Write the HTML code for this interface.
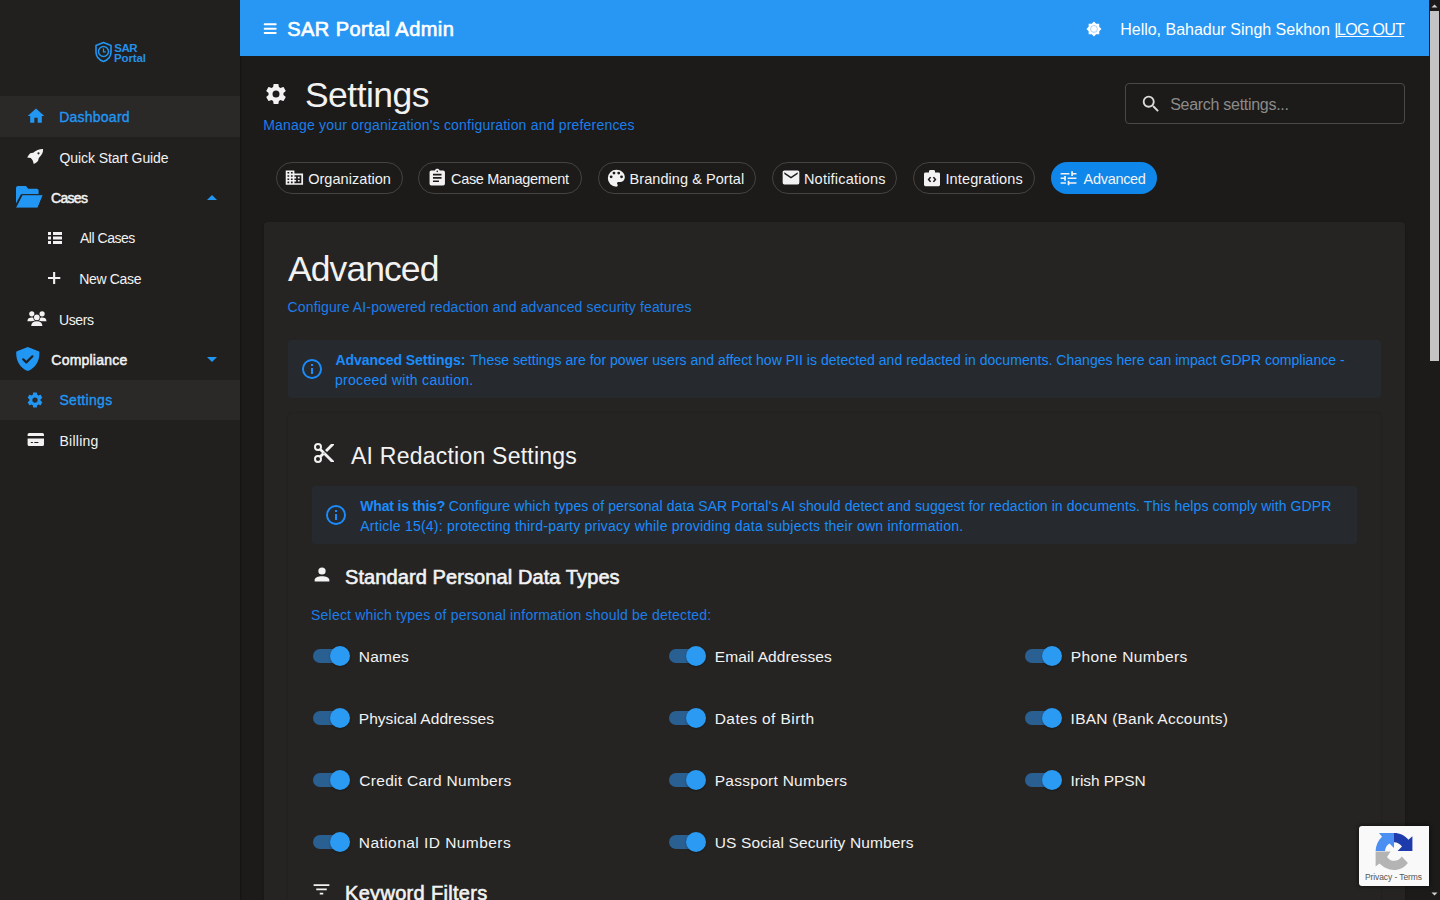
<!DOCTYPE html>
<html><head><meta charset="utf-8"><title>SAR Portal Admin - Settings</title>
<style>
html,body{margin:0;padding:0;width:1440px;height:900px;overflow:hidden;background:#1c1b1a;}
body{position:relative;font-family:"Liberation Sans",sans-serif;}
.t{position:absolute;white-space:nowrap;}
.r{position:absolute;}
svg.r{overflow:visible;}
</style></head><body>
<div class="r" style="left:0px;top:0px;width:240px;height:900px;background:#21201f;box-shadow:1px 0 2px rgba(0,0,0,.35);"></div>
<div class="r" style="left:0px;top:96px;width:240px;height:41px;background:#2a2928;"></div>
<div class="r" style="left:0px;top:380px;width:240px;height:40px;background:#2a2928;"></div>
<svg class="r" style="left:94px;top:41px;width:19px;height:22px" viewBox="0 0 19 22"><path d="M9.5,1.5 L17,4.5 V11 C17,15.5 13.8,19 9.5,20.5 C5.2,19 2,15.5 2,11 V4.5 Z" fill="none" stroke="#2196f3" stroke-width="1.6" stroke-linejoin="round"/><circle cx="9.5" cy="10.5" r="5" fill="none" stroke="#2196f3" stroke-width="1.4"/><path d="M9.5,7.5 V10.8 H11.8" fill="none" stroke="#2196f3" stroke-width="1.2"/></svg>
<div class="t" style="left:114.36px;top:42.77px;font-size:11.5px;line-height:11.5px;color:#2590e8;font-weight:bold;letter-spacing:-0.545px;">SAR</div>
<div class="t" style="left:113.89px;top:52.57px;font-size:11.5px;line-height:11.5px;color:#2590e8;font-weight:bold;letter-spacing:-0.090px;">Portal</div>
<svg class="r" style="left:26px;top:106px;width:20px;height:20px;" viewBox="0 0 24 24" preserveAspectRatio="none"><path fill="#2196f3" d="M10,20V14H14V20H19V12H22L12,3L2,12H5V20H10Z"/></svg>
<div class="t" style="left:59.28px;top:110.15px;font-size:14px;line-height:14px;color:#2196f3;letter-spacing:0.225px;-webkit-text-stroke:0.35px #2196f3;">Dashboard</div>
<svg class="r" style="left:22px;top:142px;width:28px;height:28px" viewBox="22 142 28 28"><path fill-rule="evenodd" fill="#f2f2f2" d="M43.1,149 C39.6,148.9 35.8,150.3 33.2,152.8 L30.2,153.2 C29,154.3 28,155.8 27.2,157.4 L30.8,158 L32.6,160.2 L33.8,164.1 C35.4,163.3 36.9,162.1 38,160.9 L38.8,157.9 C41.8,155.3 43.3,152.3 43.1,149 Z M38.5,152.2 A1.1,1.1 0 1,0 38.5,154.4 A1.1,1.1 0 1,0 38.5,152.2Z"/></svg>
<div class="t" style="left:59.50px;top:150.85px;font-size:14px;line-height:14px;color:#f2f2f2;letter-spacing:-0.088px;">Quick Start Guide</div>
<svg class="r" style="left:12px;top:180px;width:36px;height:36px" viewBox="12 180 36 36"><path fill="#2196f3" d="M16,188 Q16,186 18,186 H26 L28.2,188.7 H36.8 Q38.6,188.7 38.6,190.5 V194.2 H21 L16,203.5 Z"/><path fill="#2196f3" stroke="#21201f" stroke-width="1" stroke-linejoin="round" d="M22.2,194.7 H43.3 L37.8,208.1 H15.4 Z"/></svg>
<div class="t" style="left:51.10px;top:190.85px;font-size:14px;line-height:14px;color:#f2f2f2;letter-spacing:-0.715px;-webkit-text-stroke:0.5px #f2f2f2;">Cases</div>
<svg class="r" style="left:200px;top:185px;width:24px;height:24px;" viewBox="0 0 24 24" preserveAspectRatio="none"><path fill="#2196f3" d="M7,15L12,10L17,15H7Z"/></svg>
<svg class="r" style="left:47px;top:231px;width:16px;height:14px;" viewBox="0 0 16 14" preserveAspectRatio="none"><path fill="#f2f2f2" d="M1,1H4V4H1Z M6,1H15V4H6Z M1,5.5H4V8.5H1Z M6,5.5H15V8.5H6Z M1,10H4V13H1Z M6,10H15V13H6Z"/></svg>
<div class="t" style="left:80.00px;top:231.15px;font-size:14px;line-height:14px;color:#f2f2f2;letter-spacing:-0.478px;">All Cases</div>
<svg class="r" style="left:44px;top:268px;width:20px;height:20px" viewBox="44 268 20 20"><path fill="#f2f2f2" d="M53.1,272 H55.2 V276.9 H60.3 V279 H55.2 V283.9 H53.1 V279 H48 V276.9 H53.1 Z"/></svg>
<div class="t" style="left:79.28px;top:271.95px;font-size:14px;line-height:14px;color:#f2f2f2;letter-spacing:-0.337px;">New Case</div>
<svg class="r" style="left:24px;top:307px;width:26px;height:26px" viewBox="24 307 26 26"><g fill="#f2f2f2"><circle cx="31.8" cy="313.8" r="2.6"/><circle cx="42.1" cy="313.8" r="2.6"/><path d="M27.4,321.2 C27.4,318.4 29.3,317.4 31.8,317.4 C33,317.4 34,317.6 34.6,318.2 C34.6,319.4 35,320.4 35.6,321.2 Z"/><path d="M46.5,321.2 C46.5,318.4 44.6,317.4 42.1,317.4 C40.9,317.4 39.9,317.6 39.3,318.2 C39.3,319.4 38.9,320.4 38.3,321.2 Z"/></g><circle cx="36.8" cy="317.4" r="3.5" fill="#21201f"/><circle cx="36.8" cy="317.4" r="2.8" fill="#f2f2f2"/><path fill="#21201f" d="M30.4,326.6 C30.4,322.2 32.6,320.6 36.8,320.6 C41,320.6 43.2,322.2 43.2,326.6Z"/><path fill="#f2f2f2" d="M31.2,326.1 C31.2,322.9 33.2,321.3 36.8,321.3 C40.4,321.3 42.4,322.9 42.4,326.1Z"/></svg>
<div class="t" style="left:58.98px;top:312.95px;font-size:14px;line-height:14px;color:#f2f2f2;letter-spacing:-0.365px;">Users</div>
<svg class="r" style="left:12px;top:344px;width:32px;height:30px" viewBox="12 344 32 30"><path fill="#2196f3" d="M27.8,347 L38.6,351.2 C39.4,351.5 39.4,352 39.4,353 C39.4,361.5 35.5,367.6 28.6,370.7 C28.1,370.9 27.5,370.9 27,370.7 C20.1,367.6 16.2,361.5 16.2,353 C16.2,352 16.2,351.5 17,351.2 Z"/><path fill="none" stroke="#21201f" stroke-width="2.2" stroke-linecap="round" stroke-linejoin="round" d="M23.2,359.3 L26.3,362.4 L32.4,356.3"/></svg>
<div class="t" style="left:51.30px;top:353.15px;font-size:14px;line-height:14px;color:#f2f2f2;letter-spacing:0.220px;-webkit-text-stroke:0.5px #f2f2f2;">Compliance</div>
<svg class="r" style="left:200px;top:347px;width:24px;height:24px;" viewBox="0 0 24 24" preserveAspectRatio="none"><path fill="#2196f3" d="M7,10L12,15L17,10H7Z"/></svg>
<svg class="r" style="left:26px;top:391px;width:18px;height:18px;" viewBox="0 0 24 24" preserveAspectRatio="none"><path fill="#2196f3" d="M12,15.5A3.5,3.5 0 0,1 8.5,12A3.5,3.5 0 0,1 12,8.5A3.5,3.5 0 0,1 15.5,12A3.5,3.5 0 0,1 12,15.5M19.43,12.97C19.47,12.65 19.5,12.33 19.5,12C19.5,11.67 19.47,11.34 19.43,11L21.54,9.37C21.73,9.22 21.78,8.95 21.66,8.73L19.66,5.27C19.54,5.05 19.27,4.96 19.05,5.05L16.56,6.05C16.04,5.66 15.5,5.32 14.87,5.07L14.5,2.42C14.46,2.18 14.25,2 14,2H10C9.75,2 9.54,2.18 9.5,2.42L9.13,5.07C8.5,5.32 7.96,5.66 7.44,6.05L4.95,5.05C4.73,4.96 4.46,5.05 4.34,5.27L2.34,8.73C2.21,8.95 2.27,9.22 2.46,9.37L4.57,11C4.53,11.34 4.5,11.67 4.5,12C4.5,12.33 4.53,12.65 4.57,12.97L2.46,14.63C2.27,14.78 2.21,15.05 2.34,15.27L4.34,18.73C4.46,18.95 4.73,19.03 4.95,18.95L7.44,17.94C7.96,18.34 8.5,18.68 9.13,18.93L9.5,21.58C9.54,21.82 9.75,22 10,22H14C14.25,22 14.46,21.82 14.5,21.58L14.87,18.93C15.5,18.67 16.04,18.34 16.56,17.94L19.05,18.95C19.27,19.03 19.54,18.95 19.66,18.73L21.66,15.27C21.78,15.05 21.73,14.78 21.54,14.63L19.43,12.97Z"/></svg>
<div class="t" style="left:59.40px;top:392.95px;font-size:14px;line-height:14px;color:#2196f3;letter-spacing:0.317px;-webkit-text-stroke:0.35px #2196f3;">Settings</div>
<svg class="r" style="left:24px;top:428px;width:24px;height:24px" viewBox="24 428 24 24"><path fill="#f2f2f2" d="M29.2,433.1 H42.4 Q44,433.1 44,434.6 V436.1 H27.6 V434.6 Q27.6,433.1 29.2,433.1Z M27.6,438.5 H44 V444.5 Q44,446 42.4,446 H29.2 Q27.6,446 27.6,444.5Z"/><path fill="#21201f" d="M30.8,442 H32.9 V443 H30.8Z M34.3,442 H38.4 V443 H34.3Z"/></svg>
<div class="t" style="left:59.48px;top:434.05px;font-size:14px;line-height:14px;color:#f2f2f2;letter-spacing:0.253px;">Billing</div>
<div class="r" style="left:240px;top:0px;width:1189px;height:56px;background:#2897f4;"></div>
<svg class="r" style="left:258px;top:16px;width:24px;height:24px" viewBox="258 16 24 24"><g fill="#fff"><rect x="263.7" y="23.2" width="13" height="2" rx="1"/><rect x="263.7" y="27.8" width="13" height="2" rx="1"/><rect x="263.7" y="32.1" width="13" height="2" rx="1"/></g></svg>
<div class="t" style="left:287.30px;top:18.87px;font-size:20px;line-height:20px;color:#ffffff;letter-spacing:0.427px;-webkit-text-stroke:0.65px #ffffff;">SAR Portal Admin</div>
<svg class="r" style="left:1085.75px;top:20.75px;width:15.9px;height:15.9px" viewBox="0 0 24 24"><path fill="#fff" d="M20,8.69V4H15.31L12,0.69L8.69,4H4V8.69L0.69,12L4,15.31V20H8.69L12,23.31L15.31,20H20V15.31L23.31,12L20,8.69Z"/><circle cx="12" cy="12" r="5.2" fill="none" stroke="#2897f4" stroke-opacity="0.55" stroke-width="1.1"/></svg>
<div class="t" style="left:1120.22px;top:21.66px;font-size:16px;line-height:16px;color:#ffffff;letter-spacing:-0.012px;">Hello, Bahadur Singh Sekhon |</div>
<div class="t" style="left:1337.02px;top:21.66px;font-size:16px;line-height:16px;color:#ffffff;letter-spacing:-0.683px;text-decoration:underline;">LOG OUT</div>
<svg class="r" style="left:264px;top:82px;width:24px;height:24px;" viewBox="0 0 24 24" preserveAspectRatio="none"><path fill="#f2f2f2" d="M12,15.5A3.5,3.5 0 0,1 8.5,12A3.5,3.5 0 0,1 12,8.5A3.5,3.5 0 0,1 15.5,12A3.5,3.5 0 0,1 12,15.5M19.43,12.97C19.47,12.65 19.5,12.33 19.5,12C19.5,11.67 19.47,11.34 19.43,11L21.54,9.37C21.73,9.22 21.78,8.95 21.66,8.73L19.66,5.27C19.54,5.05 19.27,4.96 19.05,5.05L16.56,6.05C16.04,5.66 15.5,5.32 14.87,5.07L14.5,2.42C14.46,2.18 14.25,2 14,2H10C9.75,2 9.54,2.18 9.5,2.42L9.13,5.07C8.5,5.32 7.96,5.66 7.44,6.05L4.95,5.05C4.73,4.96 4.46,5.05 4.34,5.27L2.34,8.73C2.21,8.95 2.27,9.22 2.46,9.37L4.57,11C4.53,11.34 4.5,11.67 4.5,12C4.5,12.33 4.53,12.65 4.57,12.97L2.46,14.63C2.27,14.78 2.21,15.05 2.34,15.27L4.34,18.73C4.46,18.95 4.73,19.03 4.95,18.95L7.44,17.94C7.96,18.34 8.5,18.68 9.13,18.93L9.5,21.58C9.54,21.82 9.75,22 10,22H14C14.25,22 14.46,21.82 14.5,21.58L14.87,18.93C15.5,18.67 16.04,18.34 16.56,17.94L19.05,18.95C19.27,19.03 19.54,18.95 19.66,18.73L21.66,15.27C21.78,15.05 21.73,14.78 21.54,14.63L19.43,12.97Z"/></svg>
<div class="t" style="left:304.93px;top:77.55px;font-size:35.5px;line-height:35.5px;color:#f2f2f2;letter-spacing:-0.523px;">Settings</div>
<div class="t" style="left:263.28px;top:117.85px;font-size:14px;line-height:14px;color:#1b7ee9;letter-spacing:0.193px;">Manage your organization's configuration and preferences</div>
<div class="r" style="left:1124.5px;top:83px;width:280px;height:40.5px;box-sizing:border-box;border:1px solid #4a4947;border-radius:4px;"></div>
<svg class="r" style="left:1140px;top:92.5px;width:22px;height:22px;" viewBox="0 0 24 24" preserveAspectRatio="none"><path fill="#dcdcdc" d="M9.5,3A6.5,6.5 0 0,1 16,9.5C16,11.11 15.41,12.59 14.44,13.73L14.71,14H15.5L20.5,19L19,20.5L14,15.5V14.71L13.73,14.44C12.590,15.41 11.11,16 9.5,16A6.5,6.5 0 0,1 3,9.5A6.5,6.5 0 0,1 9.5,3M9.5,5C7,5 5,7 5,9.5C5,12 7,14 9.5,14C12,14 14,12 14,9.5C14,7 12,5 9.5,5Z"/></svg>
<div class="t" style="left:1170.20px;top:96.96px;font-size:16px;line-height:16px;color:#8c8b8a;letter-spacing:-0.285px;">Search settings...</div>
<div class="r" style="left:276px;top:162px;width:127px;height:32px;box-sizing:border-box;border:1px solid #454341;border-radius:16px;"></div>
<svg class="r" style="left:284.27px;top:168.2px;width:20.8px;height:19.2px;" viewBox="0 0 24 24" preserveAspectRatio="none"><path fill="#f2f2f2" d="M18,15H16V17H18M18,11H16V13H18M20,19H12V17H14V15H12V13H14V11H12V9H20M10,7H8V5H10M10,11H8V9H10M10,15H8V13H10M10,19H8V17H10M6,7H4V5H6M6,11H4V9H6M6,15H4V13H6M6,19H4V17H6M12,7V3H2V21H22V7H12Z"/></svg>
<div class="t" style="left:308.17px;top:171.63px;font-size:14.5px;line-height:14.5px;color:#f2f2f2;letter-spacing:0.048px;">Organization</div>
<div class="r" style="left:418.4px;top:162px;width:163.60000000000002px;height:32px;box-sizing:border-box;border:1px solid #454341;border-radius:16px;"></div>
<svg class="r" style="left:427.0px;top:168.0px;width:20.5px;height:19.9px;" viewBox="0 0 24 24" preserveAspectRatio="none"><path fill="#f2f2f2" d="M17,9H7V7H17M17,13H7V11H17M14,17H7V15H14M12,3A1,1 0 0,1 13,4A1,1 0 0,1 12,5A1,1 0 0,1 11,4A1,1 0 0,1 12,3M19,3H14.82C14.4,1.84 13.3,1 12,1C10.7,1 9.6,1.84 9.18,3H5A2,2 0 0,0 3,5V19A2,2 0 0,0 5,21H19A2,2 0 0,0 21,19V5A2,2 0 0,0 19,3Z"/></svg>
<div class="t" style="left:451.07px;top:171.63px;font-size:14.5px;line-height:14.5px;color:#f2f2f2;letter-spacing:-0.332px;">Case Management</div>
<div class="r" style="left:598px;top:162px;width:158px;height:32px;box-sizing:border-box;border:1px solid #454341;border-radius:16px;"></div>
<svg class="r" style="left:605.2px;top:166.8px;width:22.7px;height:22.5px;" viewBox="0 0 24 24" preserveAspectRatio="none"><path fill="#f2f2f2" d="M17.5,12A1.5,1.5 0 0,1 16,10.5A1.5,1.5 0 0,1 17.5,9A1.5,1.5 0 0,1 19,10.5A1.5,1.5 0 0,1 17.5,12M14.5,8A1.5,1.5 0 0,1 13,6.5A1.5,1.5 0 0,1 14.5,5A1.5,1.5 0 0,1 16,6.5A1.5,1.5 0 0,1 14.5,8M9.5,8A1.5,1.5 0 0,1 8,6.5A1.5,1.5 0 0,1 9.5,5A1.5,1.5 0 0,1 11,6.5A1.5,1.5 0 0,1 9.5,8M6.5,12A1.5,1.5 0 0,1 5,10.5A1.5,1.5 0 0,1 6.5,9A1.5,1.5 0 0,1 8,10.5A1.5,1.5 0 0,1 6.5,12M12,3A9,9 0 0,0 3,12A9,9 0 0,0 12,21A1.5,1.5 0 0,0 13.5,19.5C13.5,19.11 13.35,18.76 13.11,18.5C12.88,18.23 12.73,17.88 12.73,17.5A1.5,1.5 0 0,1 14.23,16H16A5,5 0 0,0 21,11C21,6.58 16.97,3 12,3Z"/></svg>
<div class="t" style="left:629.54px;top:171.63px;font-size:14.5px;line-height:14.5px;color:#f2f2f2;letter-spacing:0.059px;">Branding & Portal</div>
<div class="r" style="left:772.2px;top:162px;width:125.29999999999995px;height:32px;box-sizing:border-box;border:1px solid #454341;border-radius:16px;"></div>
<svg class="r" style="left:780.5px;top:167.1px;width:20px;height:21px;" viewBox="0 0 24 24" preserveAspectRatio="none"><path fill="#f2f2f2" d="M20,8L12,13L4,8V6L12,11L20,6M20,4H4C2.89,4 2,4.89 2,6V18A2,2 0 0,0 4,20H20A2,2 0 0,0 22,18V6C22,4.89 21.1,4 20,4Z"/></svg>
<div class="t" style="left:803.94px;top:171.63px;font-size:14.5px;line-height:14.5px;color:#f2f2f2;letter-spacing:0.210px;">Notifications</div>
<div class="r" style="left:913.3px;top:162px;width:121.70000000000005px;height:32px;box-sizing:border-box;border:1px solid #454341;border-radius:16px;"></div>
<svg class="r" style="left:923px;top:168.5px;width:18px;height:18.1px" viewBox="0 0 18 20" preserveAspectRatio="none"><path fill="#f2f2f2" d="M2.5,4 H6 V2.5 Q6,1 7.5,1 H10.5 Q12,1 12,2.5 V4 H15.5 Q17,4 17,5.5 V17.5 Q17,19 15.5,19 H2.5 Q1,19 1,17.5 V5.5 Q1,4 2.5,4Z"/><path fill="none" stroke="#1c1b1a" stroke-width="1.6" d="M7.6,9 L5.6,11.6 L7.6,14.2 M10.4,9 L12.4,11.6 L10.4,14.2"/></svg>
<div class="t" style="left:945.40px;top:171.63px;font-size:14.5px;line-height:14.5px;color:#f2f2f2;letter-spacing:0.141px;">Integrations</div>
<div class="r" style="left:1050.7px;top:162px;width:106.59999999999991px;height:32px;background:#0f86e9;border-radius:16px;"></div>
<svg class="r" style="left:1058.3px;top:168.7px;width:21.1px;height:18.7px;" viewBox="0 0 24 24" preserveAspectRatio="none"><path fill="#f2f2f2" d="M3,17V19H9V17H3M3,5V7H13V5H3M13,21V19H21V17H13V15H11V21H13M7,9V11H3V13H7V15H9V9H7M21,13V11H11V13H21M15,9H17V7H21V5H17V3H15V9Z"/></svg>
<div class="t" style="left:1083.60px;top:171.63px;font-size:14.5px;line-height:14.5px;color:#f2f2f2;letter-spacing:-0.316px;">Advanced</div>
<div class="r" style="left:264px;top:222px;width:1141px;height:700px;background:#252423;border-radius:4px;box-shadow:0 2px 1px -1px rgba(0,0,0,.2),0 1px 1px 0 rgba(0,0,0,.14),0 1px 3px 0 rgba(0,0,0,.12);"></div>
<div class="t" style="left:288.00px;top:251.65px;font-size:35.5px;line-height:35.5px;color:#f2f2f2;letter-spacing:-0.927px;">Advanced</div>
<div class="t" style="left:287.60px;top:300.15px;font-size:14px;line-height:14px;color:#1b7ee9;letter-spacing:0.143px;">Configure AI-powered redaction and advanced security features</div>
<div class="r" style="left:288px;top:340px;width:1093px;height:58px;background:#262a2e;border-radius:4px;"></div>
<svg class="r" style="left:300px;top:357px;width:24px;height:24px;" viewBox="0 0 24 24" preserveAspectRatio="none"><path fill="#1b8cfc" d="M11,9H13V7H11M12,20C7.59,20 4,16.41 4,12C4,7.59 7.59,4 12,4C16.41,4 20,7.59 20,12C20,16.41 16.41,20 12,20M12,2A10,10 0 0,0 2,12A10,10 0 0,0 12,22A10,10 0 0,0 22,12A10,10 0 0,0 12,2M11,17H13V11H11V17Z"/></svg>
<div class="t" style="left:335.38px;top:352.95px;font-size:14px;line-height:14px;color:#1b8cfc;font-weight:bold;letter-spacing:-0.044px;">Advanced Settings:</div>
<div class="t" style="left:470.02px;top:352.75px;font-size:14px;line-height:14px;color:#1b8cfc;letter-spacing:0.031px;">These settings are for power users and affect how PII is detected and redacted in documents. Changes here can impact GDPR compliance -</div>
<div class="t" style="left:334.96px;top:372.75px;font-size:14px;line-height:14px;color:#1b8cfc;letter-spacing:0.300px;">proceed with caution.</div>
<div class="r" style="left:288px;top:413px;width:1093px;height:600px;background:#252423;border-radius:4px;box-shadow:0 0 2px rgba(0,0,0,.25);"></div>
<svg class="r" style="left:312px;top:441px;width:24px;height:24px;" viewBox="0 0 24 24" preserveAspectRatio="none"><path fill="#f2f2f2" d="M19,3L13,9L15,11L22,4V3M12,12.5A0.5,0.5 0 0,1 11.5,12A0.5,0.5 0 0,1 12,11.5A0.5,0.5 0 0,1 12.5,12A0.5,0.5 0 0,1 12,12.5M6,20A2,2 0 0,1 4,18C4,16.89 4.9,16 6,16A2,2 0 0,1 8,18C8,19.11 7.1,20 6,20M6,8A2,2 0 0,1 4,6C4,4.89 4.9,4 6,4A2,2 0 0,1 8,6C8,7.11 7.1,8 6,8M9.64,7.64C9.87,7.14 10,6.59 10,6A4,4 0 0,0 6,2A4,4 0 0,0 2,6A4,4 0 0,0 6,10C6.59,10 7.14,9.87 7.64,9.64L10,12L7.64,14.36C7.14,14.13 6.59,14 6,14A4,4 0 0,0 2,18A4,4 0 0,0 6,22A4,4 0 0,0 10,18C10,17.41 9.87,16.86 9.64,16.36L12,14L19,21H22V20L9.64,7.64Z"/></svg>
<div class="t" style="left:351.00px;top:445.03px;font-size:23px;line-height:23px;color:#f2f2f2;letter-spacing:0.233px;">AI Redaction Settings</div>
<div class="r" style="left:312px;top:486px;width:1045px;height:57.5px;background:#262a2e;border-radius:4px;"></div>
<svg class="r" style="left:324px;top:503px;width:24px;height:24px;" viewBox="0 0 24 24" preserveAspectRatio="none"><path fill="#1b8cfc" d="M11,9H13V7H11M12,20C7.59,20 4,16.41 4,12C4,7.59 7.59,4 12,4C16.41,4 20,7.59 20,12C20,16.41 16.41,20 12,20M12,2A10,10 0 0,0 2,12A10,10 0 0,0 12,22A10,10 0 0,0 22,12A10,10 0 0,0 12,2M11,17H13V11H11V17Z"/></svg>
<div class="t" style="left:360.30px;top:498.85px;font-size:14px;line-height:14px;color:#1b8cfc;font-weight:bold;letter-spacing:-0.178px;">What is this?</div>
<div class="t" style="left:448.70px;top:498.85px;font-size:14px;line-height:14px;color:#1b8cfc;letter-spacing:0.093px;">Configure which types of personal data SAR Portal's AI should detect and suggest for redaction in documents. This helps comply with GDPR</div>
<div class="t" style="left:360.30px;top:518.85px;font-size:14px;line-height:14px;color:#1b8cfc;letter-spacing:0.230px;">Article 15(4): protecting third-party privacy while providing data subjects their own information.</div>
<svg class="r" style="left:311px;top:563.8px;width:22px;height:21px;" viewBox="0 0 24 24" preserveAspectRatio="none"><path fill="#f2f2f2" d="M12,4A4,4 0 0,1 16,8A4,4 0 0,1 12,12A4,4 0 0,1 8,8A4,4 0 0,1 12,4M12,14C16.42,14 20,15.79 20,18V20H4V18C4,15.79 7.58,14 12,14Z"/></svg>
<div class="t" style="left:345.00px;top:567.07px;font-size:20px;line-height:20px;color:#f2f2f2;letter-spacing:0.096px;-webkit-text-stroke:0.6px #f2f2f2;">Standard Personal Data Types</div>
<div class="t" style="left:311.10px;top:608.15px;font-size:14px;line-height:14px;color:#1b7ee9;letter-spacing:0.193px;">Select which types of personal information should be detected:</div>
<div class="r" style="left:313px;top:648.5px;width:36px;height:14px;background:#2a5f92;border-radius:7px;"></div>
<div class="r" style="left:330px;top:645.5px;width:20px;height:20px;background:#2a9af2;border-radius:50%;box-shadow:0 1px 2px rgba(0,0,0,.3);"></div>
<div class="t" style="left:358.76px;top:649.18px;font-size:15.5px;line-height:15.5px;color:#f2f2f2;letter-spacing:0.231px;">Names</div>
<div class="r" style="left:669px;top:648.5px;width:36px;height:14px;background:#2a5f92;border-radius:7px;"></div>
<div class="r" style="left:686px;top:645.5px;width:20px;height:20px;background:#2a9af2;border-radius:50%;box-shadow:0 1px 2px rgba(0,0,0,.3);"></div>
<div class="t" style="left:714.76px;top:649.18px;font-size:15.5px;line-height:15.5px;color:#f2f2f2;letter-spacing:0.113px;">Email Addresses</div>
<div class="r" style="left:1025px;top:648.5px;width:36px;height:14px;background:#2a5f92;border-radius:7px;"></div>
<div class="r" style="left:1042px;top:645.5px;width:20px;height:20px;background:#2a9af2;border-radius:50%;box-shadow:0 1px 2px rgba(0,0,0,.3);"></div>
<div class="t" style="left:1070.76px;top:649.18px;font-size:15.5px;line-height:15.5px;color:#f2f2f2;letter-spacing:0.383px;">Phone Numbers</div>
<div class="r" style="left:313px;top:710.5px;width:36px;height:14px;background:#2a5f92;border-radius:7px;"></div>
<div class="r" style="left:330px;top:707.5px;width:20px;height:20px;background:#2a9af2;border-radius:50%;box-shadow:0 1px 2px rgba(0,0,0,.3);"></div>
<div class="t" style="left:358.76px;top:711.18px;font-size:15.5px;line-height:15.5px;color:#f2f2f2;letter-spacing:0.046px;">Physical Addresses</div>
<div class="r" style="left:669px;top:710.5px;width:36px;height:14px;background:#2a5f92;border-radius:7px;"></div>
<div class="r" style="left:686px;top:707.5px;width:20px;height:20px;background:#2a9af2;border-radius:50%;box-shadow:0 1px 2px rgba(0,0,0,.3);"></div>
<div class="t" style="left:714.76px;top:711.18px;font-size:15.5px;line-height:15.5px;color:#f2f2f2;letter-spacing:0.415px;">Dates of Birth</div>
<div class="r" style="left:1025px;top:710.5px;width:36px;height:14px;background:#2a5f92;border-radius:7px;"></div>
<div class="r" style="left:1042px;top:707.5px;width:20px;height:20px;background:#2a9af2;border-radius:50%;box-shadow:0 1px 2px rgba(0,0,0,.3);"></div>
<div class="t" style="left:1070.61px;top:711.18px;font-size:15.5px;line-height:15.5px;color:#f2f2f2;letter-spacing:0.212px;">IBAN (Bank Accounts)</div>
<div class="r" style="left:313px;top:772.5px;width:36px;height:14px;background:#2a5f92;border-radius:7px;"></div>
<div class="r" style="left:330px;top:769.5px;width:20px;height:20px;background:#2a9af2;border-radius:50%;box-shadow:0 1px 2px rgba(0,0,0,.3);"></div>
<div class="t" style="left:359.23px;top:773.18px;font-size:15.5px;line-height:15.5px;color:#f2f2f2;letter-spacing:0.312px;">Credit Card Numbers</div>
<div class="r" style="left:669px;top:772.5px;width:36px;height:14px;background:#2a5f92;border-radius:7px;"></div>
<div class="r" style="left:686px;top:769.5px;width:20px;height:20px;background:#2a9af2;border-radius:50%;box-shadow:0 1px 2px rgba(0,0,0,.3);"></div>
<div class="t" style="left:714.76px;top:773.18px;font-size:15.5px;line-height:15.5px;color:#f2f2f2;letter-spacing:0.268px;">Passport Numbers</div>
<div class="r" style="left:1025px;top:772.5px;width:36px;height:14px;background:#2a5f92;border-radius:7px;"></div>
<div class="r" style="left:1042px;top:769.5px;width:20px;height:20px;background:#2a9af2;border-radius:50%;box-shadow:0 1px 2px rgba(0,0,0,.3);"></div>
<div class="t" style="left:1070.61px;top:773.18px;font-size:15.5px;line-height:15.5px;color:#f2f2f2;letter-spacing:-0.073px;">Irish PPSN</div>
<div class="r" style="left:313px;top:834.5px;width:36px;height:14px;background:#2a5f92;border-radius:7px;"></div>
<div class="r" style="left:330px;top:831.5px;width:20px;height:20px;background:#2a9af2;border-radius:50%;box-shadow:0 1px 2px rgba(0,0,0,.3);"></div>
<div class="t" style="left:358.76px;top:835.18px;font-size:15.5px;line-height:15.5px;color:#f2f2f2;letter-spacing:0.451px;">National ID Numbers</div>
<div class="r" style="left:669px;top:834.5px;width:36px;height:14px;background:#2a5f92;border-radius:7px;"></div>
<div class="r" style="left:686px;top:831.5px;width:20px;height:20px;background:#2a9af2;border-radius:50%;box-shadow:0 1px 2px rgba(0,0,0,.3);"></div>
<div class="t" style="left:714.76px;top:835.18px;font-size:15.5px;line-height:15.5px;color:#f2f2f2;letter-spacing:0.132px;">US Social Security Numbers</div>
<svg class="r" style="left:311.4px;top:879.2px;width:21px;height:20.8px;" viewBox="0 0 24 24" preserveAspectRatio="none"><path fill="#f2f2f2" d="M6,13H18V11H6M3,6V8H21V6M10,18H14V16H10V18Z"/></svg>
<div class="t" style="left:345.00px;top:882.87px;font-size:20px;line-height:20px;color:#f2f2f2;letter-spacing:0.314px;-webkit-text-stroke:0.6px #f2f2f2;">Keyword Filters</div>
<div class="r" style="left:1429px;top:0px;width:11px;height:900px;background:#1c1b1a;"></div>
<div class="r" style="left:1430px;top:11px;width:9px;height:350px;background:#c4c4c4;"></div>
<svg class="r" style="left:1429px;top:0;width:11px;height:11px" viewBox="0 0 11 11"><path d="M2.5,7.5 L5.5,4.5 L8.5,7.5Z" fill="#d0d0d0"/></svg>
<svg class="r" style="left:1429px;top:889px;width:11px;height:11px" viewBox="0 0 11 11"><path d="M2.5,3.5 L5.5,6.5 L8.5,3.5Z" fill="#d0d0d0"/></svg>
<div class="r" style="left:1359px;top:826px;width:70px;height:60px;background:#f9f9f9;border-radius:3px 0 0 3px;box-shadow:0 0 4px 1px rgba(0,0,0,.45)"></div>
<svg class="r" style="left:1370px;top:828px;width:48px;height:48px" viewBox="0 0 48 48">
<path fill="#4c8ff2" d="M5.6,23 C5.8,17.5 8,12.5 12,8.8 L9,5 H24 V20 L19.5,15.5 C17,17 15.2,19.7 15,23 Z"/>
<path fill="#1e3bab" d="M24,5 C30,5 35,7.5 38.4,11.7 L42.4,8.3 V23 H27.6 L32,18.6 C30,15.8 27.5,14.2 24,14.2 Z"/>
<path fill="#b4b4b4" d="M5.6,23.5 H20.6 L17,28.9 C19,31.4 21.5,32.8 24,32.8 C27.3,32.8 30,31.2 31.8,28.5 L37.9,35 C34.5,39.5 29.5,42 24,42 C18.3,42 13.2,39.3 9.6,35.6 L5.6,38.6 Z"/>
</svg>
<div class="t" style="left:1364.92px;top:873.30px;font-size:8.5px;line-height:8.5px;color:#555555;letter-spacing:-0.091px;">Privacy - Terms</div>
</body></html>
